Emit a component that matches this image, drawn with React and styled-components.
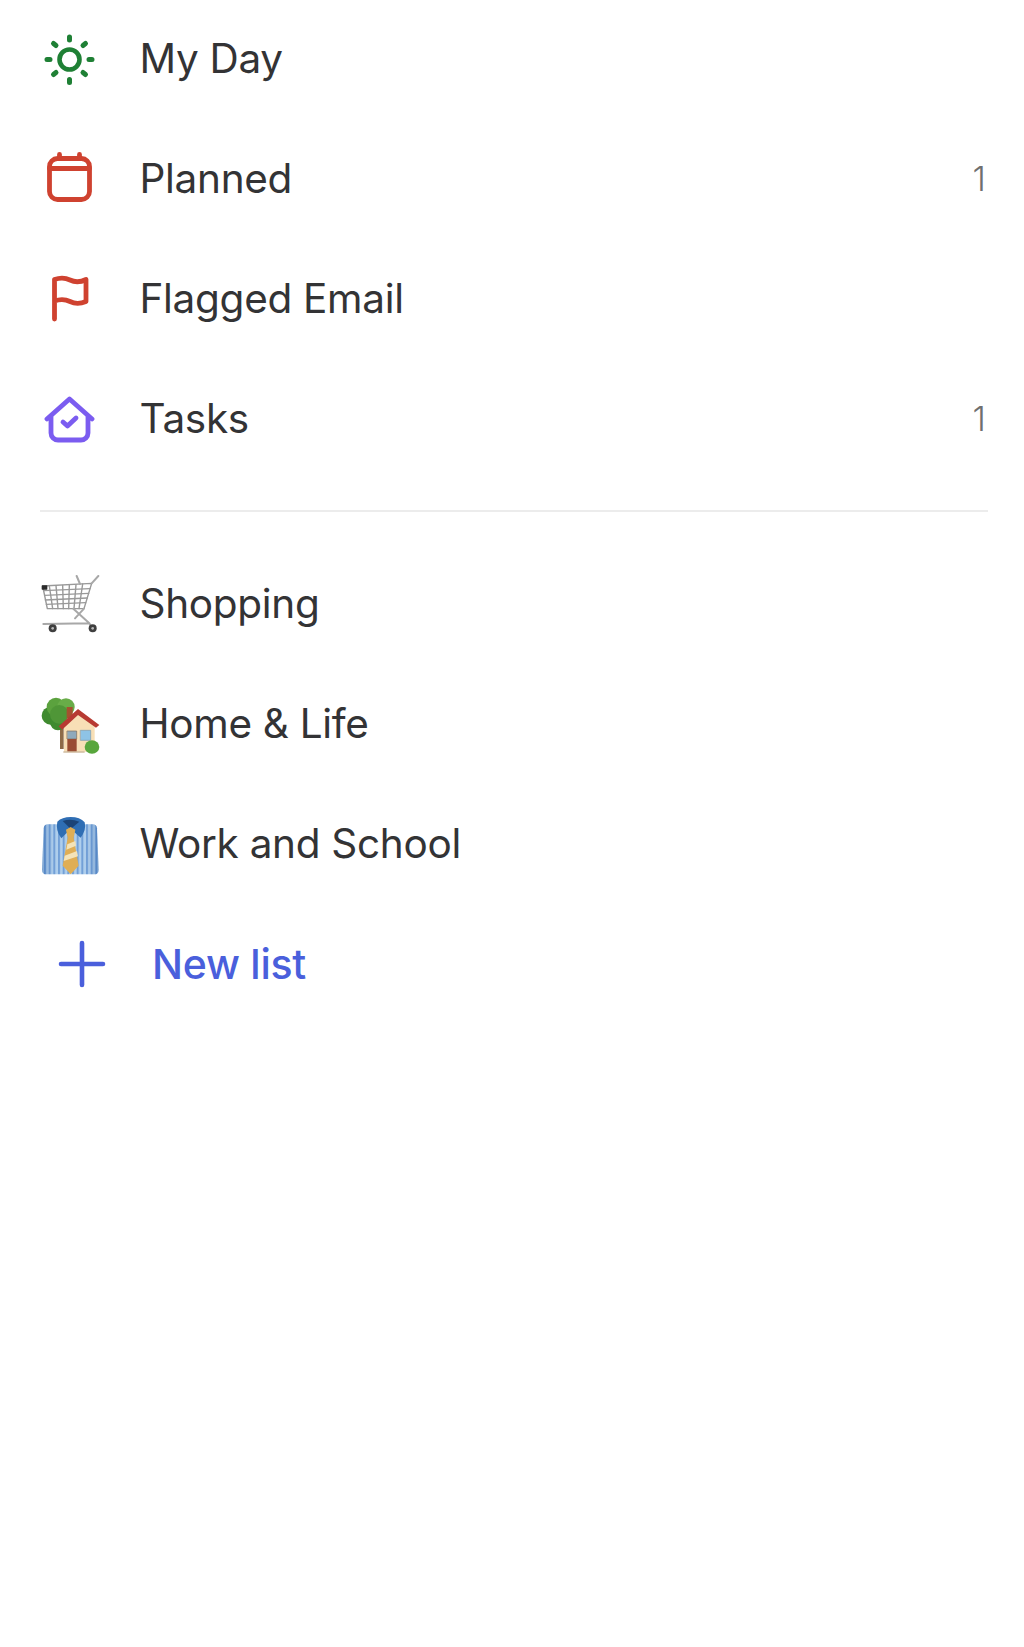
import React from "react";
import styled, { createGlobalStyle } from "styled-components";

const Global = createGlobalStyle`
  html, body { margin: 0; padding: 0; background: #fff; }
`;

const Page = styled.div`
  width: 1024px;
  height: 1647px;
  background: #fff;
  font-family: Inter, "Noto Sans", sans-serif;
  overflow: hidden;
`;

const Section = styled.div`
  display: flex;
  flex-direction: column;
`;

const Divider = styled.div`
  height: 2px;
  margin: 30px 36px 32px 40px;
  background: #ececec;
`;

const Row = styled.div`
  display: flex;
  align-items: center;
  height: 120px;
  padding: 0 38px 0 ${p => (p.$action ? 52 : 40)}px;
  box-sizing: border-box;
`;

const IconSlot = styled.div`
  flex: none;
  width: 60px;
  height: 60px;
  margin-right: ${p => (p.$action ? 40 : 39.5)}px;
  filter: ${p => (p.$soft ? "blur(0.6px)" : "blur(0.3px)")};
  svg { display: block; overflow: visible; }
`;

const Label = styled.span`
  flex: 1;
  font-size: ${p => (p.$action ? 41 : 40.5)}px;
  line-height: 1;
  padding-bottom: ${p => (p.$action || p.$soft ? 0 : 1)}px;
  padding-top: ${p => (p.$soft ? 1 : 0)}px;
  letter-spacing: ${p => (p.$action ? -0.25 : -0.3)}px;
  color: ${p => (p.$action ? "#4a5fdc" : "#333335")};
  font-weight: ${p => (p.$action ? 500 : 400)};
`;

const Count = styled.span`
  font-size: 34px;
  font-weight: 300;
  line-height: 1;
  padding-bottom: 2px;
  color: #6f6f6f;
`;

const Icon = ({ children, box = "0 0 60 60", ...rest }) => (
  <svg width="60" height="60" viewBox={box} fill="none" strokeLinecap="round" strokeLinejoin="round" {...rest}>
    {children}
  </svg>
);

const Sun = () => (
  <Icon stroke="#1f8035">
    <circle cx="29.5" cy="29.5" r="10" strokeWidth="4.6" />
    <g strokeWidth="5">
      <path d="M29.500 7v3M29.500 49.500v3M7 29.500h3M49 29.500h3" />
      <path d="M13.500 13.500l2.500 2M45.500 13.500l-2.500 2M13.500 44.500l2.500-2M45.500 44.500l-2.500-2" />
    </g>
  </Icon>
);

const Calendar = () => (
  <Icon stroke="#cf4230" strokeWidth="4.8">
    <rect x="9.500" y="8.500" width="40" height="41" rx="8" />
    <path d="M9.500 18.500h40M19.500 4.500v4M39.500 4.500v4" />
  </Icon>
);

const Flag = () => (
  <Icon stroke="#cf4230" strokeWidth="4.8">
    <path d="M14.500 49V9.500C20 7.500 25 7.500 30 10c5 2.500 10 2.500 16 -0.500v22C40 34 35 34 30 31.500C25 29 20 29 14.500 31" />
  </Icon>
);

const House = () => (
  <Icon stroke="#7b5cf0" strokeWidth="4.8">
    <path d="M7 29L29.500 9L52 29" />
    <path d="M11 27v16a7 7 0 0 0 7 7h23a7 7 0 0 0 7-7V27" />
    <path d="M23 32l4.500 4 8.500-8" />
  </Icon>
);

const Cart = () => (
  <Icon box="30 42 180 180">
    <g stroke="#6e6e6e" strokeWidth="4.2" opacity="0.7">
      <path d="M38 78L185 70L162 146L52 146Z" />
      <path d="M58 78L68 146M78 77L84 146M98 76L100 146M118 75L116 146M138 74L132 146M158 72L147 146" />
      <path d="M41 92L180 86M44 106L176 100M46 120L172 114M49 133L167 128" />
    </g>
    <g stroke="#a8a8a8" strokeWidth="6">
      <path d="M185 70L205 48M140 48L150 72" />
      <path d="M130 146L178 190L40 192M162 146L135 175M178 190L186 205" />
    </g>
    <rect x="35" y="76" width="17" height="13" rx="2" fill="#2b2b2b" />
    <circle cx="68" cy="205" r="12" fill="#3f3f3f" />
    <circle cx="68" cy="205" r="4" fill="#b8b8b8" />
    <circle cx="188" cy="205" r="12" fill="#3f3f3f" />
    <circle cx="188" cy="205" r="4" fill="#b8b8b8" />
  </Icon>
);

const HomeEmoji = () => (
  <Icon box="30 27 180 180">
    <rect x="90" y="120" width="11" height="72" fill="#8d6a48" />
    <circle cx="62" cy="92" r="27" fill="#3f8a2f" />
    <circle cx="84" cy="112" r="24" fill="#3f8a2f" />
    <circle cx="78" cy="66" r="28" fill="#5ba23e" />
    <circle cx="108" cy="66" r="26" fill="#68ac48" />
    <circle cx="88" cy="88" r="28" fill="#4f9637" />
    <rect x="110" y="66" width="18" height="34" fill="#a5512f" />
    <path d="M102 120L145 84L194 118V200H102Z" fill="#f8dfb6" />
    <path d="M86 124L144 72L208 120L198 128L144 90L96 134Z" fill="#b73a32" />
    <rect x="112" y="138" width="28" height="24" fill="#8fa9bb" stroke="#7a6a5a" strokeWidth="2" />
    <rect x="152" y="136" width="30" height="30" fill="#8ec3e6" stroke="#7a97aa" strokeWidth="2" />
    <rect x="112" y="162" width="28" height="38" fill="#9a4d33" />
    <ellipse cx="186" cy="186" rx="22" ry="20" fill="#58a63c" />
    <rect x="100" y="199" width="64" height="4" fill="#c9b394" />
  </Icon>
);

const Shirt = () => (
  <Icon box="30 27 180 180">
    <defs>
      <pattern id="shirtStripes" width="14" height="10" patternUnits="userSpaceOnUse">
        <rect width="14" height="10" fill="#a4c8ea" />
        <rect width="6" height="10" fill="#5f93d2" />
      </pattern>
      <linearGradient id="shirtShade" x1="0" y1="0" x2="1" y2="0">
        <stop offset="0" stopColor="#1f4f96" stopOpacity="0.3" />
        <stop offset="0.25" stopColor="#ffffff" stopOpacity="0.12" />
        <stop offset="0.75" stopColor="#ffffff" stopOpacity="0.12" />
        <stop offset="1" stopColor="#1f4f96" stopOpacity="0.3" />
      </linearGradient>
    </defs>
    <path d="M54 58H188Q200 58 201 70L206 194Q206 208 192 208H50Q36 208 36 194L41 70Q42 58 54 58Z" fill="url(#shirtStripes)" />
    <path d="M54 58H188Q200 58 201 70L206 194Q206 208 192 208H50Q36 208 36 194L41 70Q42 58 54 58Z" fill="url(#shirtShade)" />
    <path d="M82 50Q96 36 122 36Q150 36 164 52Q170 74 152 98L122 72L94 100Q76 76 82 50Z" fill="#2f6eb4" />
    <path d="M98 48Q122 40 148 50L122 72Z" fill="#1c4477" />
    <path d="M108 74L122 66L136 74L131 98L146 182L122 208L98 182L113 98Z" fill="#dfae55" />
    <path d="M112 118L136 108L138 122L109 134ZM104 152L141 138L144 154L101 168Z" fill="#f3e3b8" />
  </Icon>
);

const Plus = () => (
  <Icon stroke="#4a5fdc" strokeWidth="4.6">
    <path d="M30 9v42M9 30h42" />
  </Icon>
);

const smart = [
  { name: "My Day", icon: <Sun /> },
  { name: "Planned", icon: <Calendar />, count: 1 },
  { name: "Flagged Email", icon: <Flag /> },
  { name: "Tasks", icon: <House />, count: 1 },
];

const lists = [
  { name: "Shopping", icon: <Cart />, soft: true },
  { name: "Home & Life", icon: <HomeEmoji />, soft: true },
  { name: "Work and School", icon: <Shirt />, soft: true },
];

const ListRow = ({ item }) => (
  <Row>
    <IconSlot $soft={item.soft}>{item.icon}</IconSlot>
    <Label $soft={item.soft}>{item.name}</Label>
    {item.count ? <Count>{item.count}</Count> : null}
  </Row>
);

export default function App() {
  return (
    <Page>
      <Global />
      <Section>
        {smart.map(i => <ListRow key={i.name} item={i} />)}
      </Section>
      <Divider />
      <Section>
        {lists.map(i => <ListRow key={i.name} item={i} />)}
        <Row $action>
          <IconSlot $action><Plus /></IconSlot>
          <Label $action>New list</Label>
        </Row>
      </Section>
    </Page>
  );
}
